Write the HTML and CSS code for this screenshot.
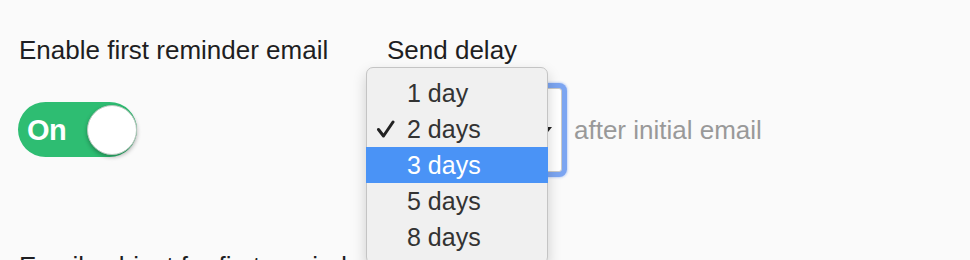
FILE: index.html
```html
<!DOCTYPE html>
<html>
<head>
<meta charset="utf-8">
<link rel="stylesheet" href="styles.css">
</head>
<body>
<div class="page">
  <div class="row">
    <div class="col col-enable">
      <div class="label">Enable first reminder email</div>
      <div class="toggle">
        <span class="toggle-text">On</span>
        <span class="knob"></span>
      </div>
    </div>
    <div class="col col-delay">
      <div class="label">Send delay</div>
      <div class="select-row">
        <div class="select">
          <svg class="caret" width="10" height="8" viewBox="0 0 10 8"><path d="M1 1 L5 6 L9 1 Z" fill="#222"/></svg>
        </div>
        <span class="hint">after initial email</span>
      </div>
      <div class="menu">
        <div class="item">1 day</div>
        <div class="item"><svg class="check" width="20" height="18" viewBox="0 0 20 18"><path d="M2.5 9.5 L7.5 16 L17 2" fill="none" stroke="#222" stroke-width="3" stroke-linecap="round" stroke-linejoin="round"/></svg>2 days</div>
        <div class="item active">3 days</div>
        <div class="item">5 days</div>
        <div class="item">8 days</div>
      </div>
    </div>
  </div>
  <div class="label subject">Email subject for first reminder</div>
</div>
</body>
</html>
```
FILE: styles.css
```css
html, body {
  margin: 0;
  padding: 0;
  background: #fafafa;
}
body {
  font-family: "Liberation Sans", Arial, sans-serif;
  color: #1e1e22;
  overflow: hidden;
  height: 260px;
}
.page {
  padding: 35px 0 0 19px;
}
.row {
  display: flex;
}
.col {
  display: flex;
  flex-direction: column;
  align-items: flex-start;
}
.col-enable {
  width: 368px;
}
.col-delay {
  position: relative;
}
.label {
  font-size: 26px;
  line-height: 30px;
  white-space: nowrap;
}
.toggle {
  margin-top: 37px;
  margin-left: -1px;
  width: 119px;
  height: 55px;
  box-sizing: border-box;
  border-radius: 28px;
  background: #2ebd72;
  display: flex;
  align-items: center;
  justify-content: space-between;
  padding: 0 0 0 9px;
}
.toggle-text {
  color: #fff;
  font-size: 29px;
  font-weight: bold;
  line-height: 30px;
  letter-spacing: -0.5px;
}
.knob {
  width: 50px;
  height: 50px;
  border-radius: 50%;
  background: #fff;
  border: 1px solid #b9c9bf;
  box-sizing: border-box;
  box-shadow: 0 2px 4px rgba(0, 0, 0, 0.3);
}
.select-row {
  margin-top: 23px;
  display: flex;
  align-items: center;
  gap: 12px;
}
.select {
  width: 175px;
  height: 84px;
  box-sizing: border-box;
  background: #fff;
  border: 1px solid #c9c9c9;
  border-radius: 3px;
  box-shadow: 0 0 0 5px rgba(110, 155, 240, 0.85), 0 0 2px 6px rgba(110, 155, 240, 0.35);
  display: flex;
  align-items: center;
  justify-content: flex-end;
  padding-right: 8px;
}
.caret {
  display: block;
}
.hint {
  font-size: 26px;
  line-height: 30px;
  color: #999;
  white-space: nowrap;
}
.menu {
  position: absolute;
  left: -21px;
  top: 32px;
  width: 182px;
  box-sizing: border-box;
  padding: 7px 0 8px;
  background: #f0f0f0;
  border: 1px solid #c4c4c4;
  border-radius: 7px;
  box-shadow: 0 6px 14px rgba(0, 0, 0, 0.18);
}
.item {
  position: relative;
  height: 36px;
  line-height: 36px;
  font-size: 25px;
  color: #333;
  padding-left: 41px;
  margin: 0 -1px;
}
.item.active {
  background: #4a93f6;
  color: #fff;
}
.check {
  position: absolute;
  left: 10px;
  top: 9px;
}
.subject {
  margin-top: 79px;
}
```
